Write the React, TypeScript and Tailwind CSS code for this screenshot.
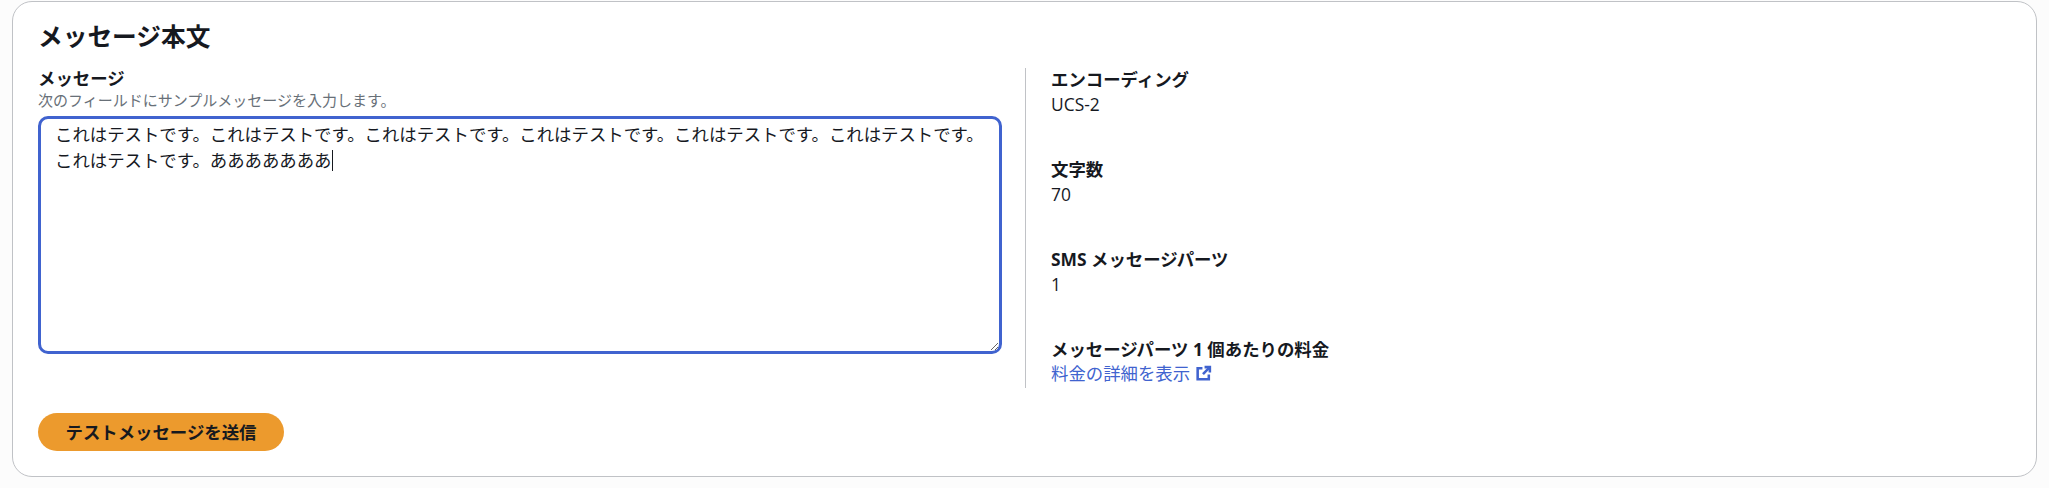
const FONT = "font-['Open_Sans','Noto_Sans_CJK_JP',sans-serif]";

const stats = [
  { label: "エンコーディング", value: "UCS-2" },
  { label: "文字数", value: "70" },
  { label: "SMS メッセージパーツ", value: "1" },
];

export default function App() {
  return (
    <div className={`${FONT} h-[488px] bg-[#fcfcfc] px-3 pt-px text-[#16191f]`}>
      <div className="h-[476px] rounded-[20px] border border-[#c0c2c6] bg-white pl-[25px] pr-6 pt-[19px]">
        <h2 className="text-[24.7px] leading-8 font-bold">メッセージ本文</h2>

        <div className="mt-[15px] flex">
          {/* Message input */}
          <div className="w-[964px] shrink-0">
            <div className="text-[17.4px] leading-[20px] font-bold">メッセージ</div>
            <div className="mt-px text-[15px] leading-[22px] text-[#687078]">次のフィールドにサンプルメッセージを入力します。</div>
            <div className="mt-[5px] h-[238px] resize overflow-auto rounded-[10px] border-[3px] border-[#4063cf] px-[14px] py-[3px] text-[17.4px] leading-[25.5px]">
              これはテストです。これはテストです。これはテストです。これはテストです。これはテストです。これはテストです。これはテストです。あああああああ
              <span className="inline-block h-[21px] w-px bg-[#16191f] align-[-4px]" />
            </div>
          </div>

          {/* Details */}
          <div className="ml-[23px] h-[320px] border-l border-[#c0c2c6] pl-[25px]">
            {stats.map((s) => (
              <div key={s.label} className="mb-[38.5px]">
                <div className="text-[17.4px] leading-[22px] font-bold">{s.label}</div>
                <div className="text-[17.4px] leading-[29.5px]">{s.value}</div>
              </div>
            ))}
            <div className="text-[17.4px] leading-[22px] font-bold">メッセージパーツ 1 個あたりの料金</div>
            <a className="flex items-center gap-[5px] text-[17.4px] leading-[27px] text-[#4063cf]">
              料金の詳細を表示
              <svg viewBox="0 0 16 16" className="h-[17px] w-[17px]" fill="none" stroke="currentColor" strokeWidth={2.4}>
                <path d="M7 3H2.5v10.5H13V9" />
                <path d="M9 2h5v5" />
                <path d="M14 2L7.5 8.5" />
              </svg>
            </a>
          </div>
        </div>

        <button className="mt-[25px] flex h-[38px] w-[246px] items-center justify-center rounded-full bg-[#ec9a2d] text-[17.4px] font-bold">
          テストメッセージを送信
        </button>
      </div>
    </div>
  );
}
